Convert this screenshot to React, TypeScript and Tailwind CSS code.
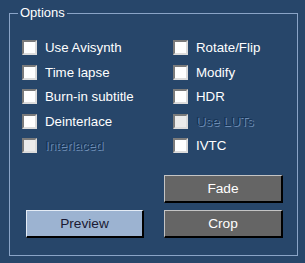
const left = [
  { label: 'Use Avisynth' },
  { label: 'Time lapse' },
  { label: 'Burn-in subtitle' },
  { label: 'Deinterlace' },
  { label: 'Interlaced', disabled: true },
];

const right = [
  { label: 'Rotate/Flip' },
  { label: 'Modify' },
  { label: 'HDR' },
  { label: 'Use LUTs', disabled: true },
  { label: 'IVTC' },
];

function Check({ label, disabled }: { label: string; disabled?: boolean }) {
  return (
    <div className="flex h-[15px] items-center gap-[8px]">
      <span
        className={`h-[15px] w-[15px] shrink-0 border-2 border-t-[#7b7b7b] border-l-[#7b7b7b] border-r-[#dcdcdc] border-b-[#dcdcdc] ${disabled ? 'bg-[#ebebeb]' : 'bg-white'}`}
      />
      <span
        className={
          disabled
            ? 'text-[#163456] [text-shadow:1px_1px_0_#6d8db5]'
            : 'text-white'
        }
      >
        {label}
      </span>
    </div>
  );
}

export default function App() {
  return (
    <div className="h-[263px] w-[305px] overflow-hidden bg-[#27466a] pt-[13px] font-['Liberation_Sans',Arial,sans-serif] text-[13.3px] leading-[15px]">
      <div className="relative ml-[9px] h-[243px] w-[289px] border border-[#8aa4c7]">
        <span className="absolute -top-[9px] left-[8px] bg-[#27466a] px-[2px] text-[13px] text-white">Options</span>

        <div className="flex pl-[12px] pt-[26px]">
          <div className="flex w-[151px] flex-col gap-[9.5px]">
            {left.map((c) => (
              <Check key={c.label} {...c} />
            ))}
          </div>
          <div className="flex flex-col gap-[9.5px]">
            {right.map((c) => (
              <Check key={c.label} {...c} />
            ))}
          </div>
        </div>

        <div className="mt-[22px] flex items-end gap-[20px] pl-[16px] text-[13.7px]">
          <button className="h-[28px] w-[118px] border-t border-l border-[#e4ecf6] border-r-2 border-b-2 border-r-black border-b-black bg-[#9cb3d1] text-[#1a1a33]">
            Preview
          </button>
          <div className="flex w-[119px] flex-col gap-[7px]">
            <button className="h-[28px] border-t border-l border-[#c4c4c4] border-r-2 border-b-2 border-r-black border-b-black bg-[#656565] text-white">
              Fade
            </button>
            <button className="h-[28px] border-t border-l border-[#c4c4c4] border-r-2 border-b-2 border-r-black border-b-black bg-[#656565] text-white">
              Crop
            </button>
          </div>
        </div>
      </div>
    </div>
  );
}
